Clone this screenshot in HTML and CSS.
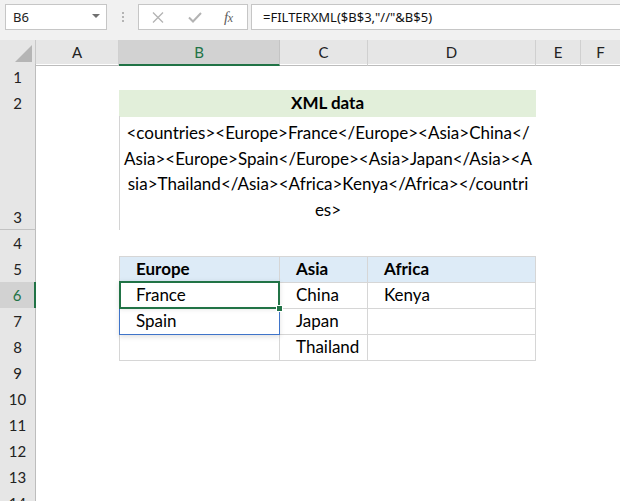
FILE: index.html
```html
<!DOCTYPE html>
<html lang="en">
<head>
<meta charset="utf-8">
<title>FILTERXML</title>
<link rel="stylesheet" href="styles.css">
</head>
<body>
<div class="app">
  <div class="fbar">
    <div class="namebox"><span class="nb-text">B6</span><span class="nb-arrow"></span></div>
    <div class="grip"><i></i><i></i><i></i></div>
    <div class="fbtns">
      <svg class="ic ic-x" width="12" height="11" viewBox="0 0 12 11"><path d="M1 0.5 L11 10.5 M11 0.5 L1 10.5" stroke="#b3b3b3" stroke-width="1.3" fill="none"/></svg>
      <svg class="ic ic-check" width="14" height="11" viewBox="0 0 14 11"><path d="M1 5.5 L5 9.5 L13 1" stroke="#b3b3b3" stroke-width="2" fill="none"/></svg>
      <span class="fx">f<span class="fx-x">x</span></span>
    </div>
    <div class="finput">=FILTERXML($B$3,"//"&amp;B$5)</div>
  </div>

  <div class="sheet">
    <div class="row colhdr">
      <div class="corner"><span class="tri"></span></div>
      <div class="ch">A</div>
      <div class="ch ch-sel">B</div>
      <div class="ch">C</div>
      <div class="ch">D</div>
      <div class="ch">E</div>
      <div class="ch ch-last">F</div>
    </div>

    <div class="row"><div class="rh">1</div></div>

    <div class="row">
      <div class="rh">2</div>
      <div class="cell span-bd xmlhead">XML data</div>
    </div>

    <div class="row tall">
      <div class="rh rh-tall">3</div>
      <div class="cell span-bd xmltext">&lt;countries&gt;&lt;Europe&gt;France&lt;/Europe&gt;&lt;Asia&gt;China&lt;/<br>Asia&gt;&lt;Europe&gt;Spain&lt;/Europe&gt;&lt;Asia&gt;Japan&lt;/Asia&gt;&lt;A<br>sia&gt;Thailand&lt;/Asia&gt;&lt;Africa&gt;Kenya&lt;/Africa&gt;&lt;/countri<br>es&gt;</div>
    </div>

    <div class="row"><div class="rh">4</div></div>

    <div class="row">
      <div class="rh">5</div>
      <div class="cell tcell thead tfirst ttop col-b">Europe</div>
      <div class="cell tcell thead ttop col-c">Asia</div>
      <div class="cell tcell thead ttop col-d">Africa</div>
    </div>

    <div class="row">
      <div class="rh rh-sel">6</div>
      <div class="cell tcell tfirst col-b active">France<span class="handle"></span></div>
      <div class="cell tcell col-c">China</div>
      <div class="cell tcell col-d">Kenya</div>
    </div>

    <div class="row">
      <div class="rh">7</div>
      <div class="cell tcell tfirst col-b spill">Spain</div>
      <div class="cell tcell col-c">Japan</div>
      <div class="cell tcell col-d"></div>
    </div>

    <div class="row">
      <div class="rh">8</div>
      <div class="cell tcell tfirst col-b"></div>
      <div class="cell tcell col-c">Thailand</div>
      <div class="cell tcell col-d"></div>
    </div>

    <div class="row"><div class="rh">9</div></div>
    <div class="row"><div class="rh">10</div></div>
    <div class="row"><div class="rh">11</div></div>
    <div class="row"><div class="rh">12</div></div>
    <div class="row"><div class="rh">13</div></div>
    <div class="row"><div class="rh">14</div></div>
  </div>
</div>
</body>
</html>
```

FILE: styles.css
```css
html, body {
  margin: 0;
  padding: 0;
  background: #ffffff;
  overflow: hidden;
}

.app {
  width: 620px;
  height: 501px;
  overflow: hidden;
  font-family: "Lato", "Liberation Sans", sans-serif;
  color: #000;
}

/* ---------- formula bar ---------- */
.fbar {
  height: 40px;
  box-sizing: border-box;
  background: #f1f1f1;
  display: flex;
  align-items: flex-start;
  padding: 4px 0 0 5px;
  font-family: "Noto Sans", "Open Sans", sans-serif;
  font-size: 13px;
}

.namebox {
  width: 102px;
  height: 26px;
  box-sizing: border-box;
  background: #fff;
  border: 1px solid #c6c6c6;
  display: flex;
  align-items: center;
  justify-content: space-between;
  padding: 0 6px 0 7px;
  color: #222;
}

.nb-arrow {
  width: 0;
  height: 0;
  border-left: 4px solid transparent;
  border-right: 4px solid transparent;
  border-top: 4px solid #707070;
  margin-top: -2px;
}

.grip {
  width: 31px;
  display: flex;
  flex-direction: column;
  align-items: center;
  gap: 2px;
  padding-top: 8px;
  box-sizing: border-box;
  height: 26px;
}

.grip i {
  display: block;
  width: 2px;
  height: 2px;
  background: #b4b4b4;
}

.fbtns {
  width: 110px;
  height: 26px;
  box-sizing: border-box;
  background: #fff;
  border: 1px solid #c6c6c6;
  display: flex;
  align-items: center;
  padding-left: 13px;
}

.ic-x { margin-right: 24px; }
.ic-check { margin-right: 22px; }

.fx {
  font-family: "Liberation Serif", "DejaVu Serif", serif;
  font-style: italic;
  font-size: 15px;
  color: #606060;
  letter-spacing: -0.5px;
}

.fx-x {
  font-size: 12px;
}

.finput {
  flex: 1;
  margin-left: 3px;
  height: 26px;
  box-sizing: border-box;
  background: #fff;
  border: 1px solid #c6c6c6;
  border-right: none;
  padding-left: 11px;
  line-height: 24px;
  color: #111;
  white-space: nowrap;
}

/* ---------- sheet grid ---------- */
.sheet {
  display: flex;
  flex-direction: column;
}

.row {
  display: grid;
  grid-template-columns: 36px 83px 161px 88px 168px 45px 1fr;
  height: 26px;
  flex: none;
}

.row.tall { height: 114px; }

.colhdr {
  height: 24px;
  background: #e6e6e6;
}

.corner {
  grid-column: 1;
  box-sizing: border-box;
  border-right: 1px solid #c8c8c8;
  border-bottom: 1px solid #bcbcbc;
  display: flex;
  justify-content: flex-end;
  align-items: flex-end;
  padding: 0 3px 3px 0;
}

.tri {
  width: 17px;
  height: 17px;
  background: #b5b5b5;
  clip-path: polygon(100% 0, 100% 100%, 0 100%);
}

.ch {
  box-sizing: border-box;
  border-right: 1px solid #d0d0d0;
  border-bottom: 1px solid #bcbcbc;
  text-align: center;
  font-size: 15px;
  line-height: 24px;
  color: #222;
}

.ch-last { border-right: none; }

.ch-sel {
  background: #d2d2d2;
  color: #217346;
  border-bottom: 2px solid #217346;
  border-right-color: #c4c4c4;
}

.rh {
  grid-column: 1;
  box-sizing: border-box;
  background: #e6e6e6;
  border-right: 1px solid #bdbdbd;
  border-bottom: 1px solid #c2c2c2;
  text-align: center;
  font-size: 15px;
  line-height: 26px;
  color: #222;
}

.rh-tall {
  display: flex;
  align-items: flex-end;
  justify-content: center;
  line-height: 24px;
}

.rh-sel {
  background: #d2d2d2;
  color: #217346;
  border-right: 2px solid #217346;
}

/* ---------- cells ---------- */
.cell {
  box-sizing: border-box;
  font-size: 17px;
  white-space: nowrap;
}

.span-bd { grid-column: 3 / 6; }
.col-b { grid-column: 3; }
.col-c { grid-column: 4; }
.col-d { grid-column: 5; }

.xmlhead {
  background: #e2efda;
  font-weight: 700;
  text-align: center;
  line-height: 26px;
}

.xmltext {
  border-left: 1px solid #d4d4d4;
  text-align: center;
  line-height: 25.7px;
  padding-top: 4px;
}

.tcell {
  border-right: 1px solid #d6d6d6;
  border-bottom: 1px solid #d6d6d6;
  padding-left: 16px;
  line-height: 25px;
}

.tfirst { border-left: 1px solid #d6d6d6; }
.ttop { border-top: 1px solid #d6d6d6; line-height: 24px; }

.thead {
  background: #ddebf7;
  font-weight: 700;
}

.active {
  position: relative;
  z-index: 2;
  box-shadow: 0 0 5px rgba(0, 0, 0, 0.12);
}

.active::after {
  content: "";
  position: absolute;
  left: -1px;
  top: -1px;
  right: -1px;
  bottom: -1px;
  border: 2px solid #217346;
}

.handle {
  position: absolute;
  right: -4px;
  bottom: -4px;
  width: 5px;
  height: 5px;
  background: #217346;
  border: 1px solid #fff;
  z-index: 3;
}

.spill {
  position: relative;
  z-index: 1;
  border-left: 1px solid #3f74c9;
  border-right: 1px solid #3f74c9;
  border-bottom: 1px solid #3f74c9;
  box-shadow: 0 2px 5px rgba(0, 0, 0, 0.12);
}
```
